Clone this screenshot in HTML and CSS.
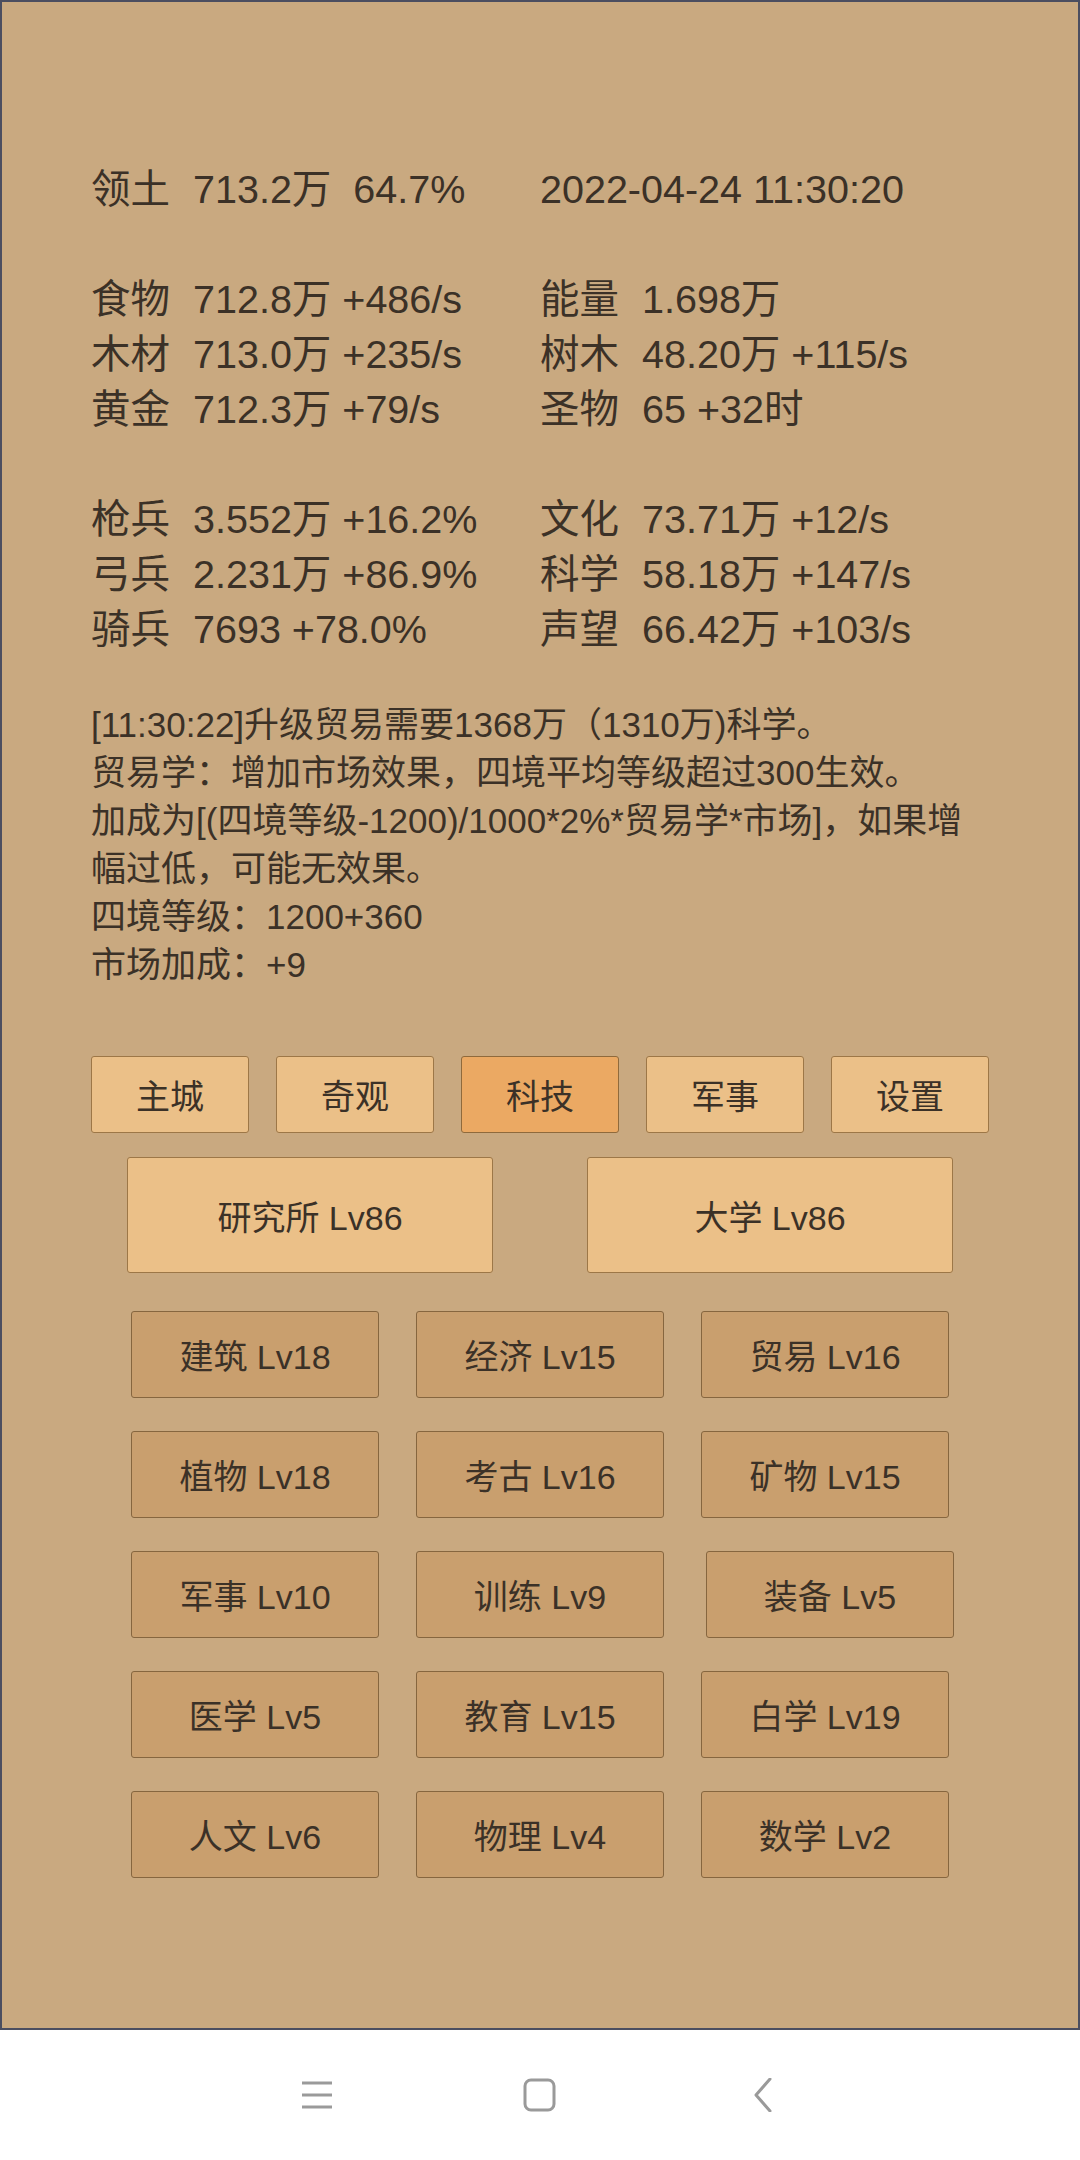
FILE: index.html
```html
<!DOCTYPE html>
<html lang="zh-CN">
<head>
<meta charset="utf-8">
<title>科技</title>
<link rel="stylesheet" href="styles.css">
</head>
<body>
<div class="screen">
  <div class="panel">
    <div class="stats">
      <div class="cell"><span class="k">领土</span><span class="v">713.2万  64.7%</span></div>
      <div class="cell"><span class="v">2022-04-24 11:30:20</span></div>
      <div class="blank"></div>
      <div class="cell"><span class="k">食物</span><span class="v">712.8万 +486/s</span></div>
      <div class="cell"><span class="k">能量</span><span class="v">1.698万</span></div>
      <div class="cell"><span class="k">木材</span><span class="v">713.0万 +235/s</span></div>
      <div class="cell"><span class="k">树木</span><span class="v">48.20万 +115/s</span></div>
      <div class="cell"><span class="k">黄金</span><span class="v">712.3万 +79/s</span></div>
      <div class="cell"><span class="k">圣物</span><span class="v">65 +32时</span></div>
      <div class="blank"></div>
      <div class="cell"><span class="k">枪兵</span><span class="v">3.552万 +16.2%</span></div>
      <div class="cell"><span class="k">文化</span><span class="v">73.71万 +12/s</span></div>
      <div class="cell"><span class="k">弓兵</span><span class="v">2.231万 +86.9%</span></div>
      <div class="cell"><span class="k">科学</span><span class="v">58.18万 +147/s</span></div>
      <div class="cell"><span class="k">骑兵</span><span class="v">7693 +78.0%</span></div>
      <div class="cell"><span class="k">声望</span><span class="v">66.42万 +103/s</span></div>
    </div>

    <div class="log">
      <div>[11:30:22]升级贸易需要1368万（1310万)科学。</div>
      <div>贸易学：增加市场效果，四境平均等级超过300生效。</div>
      <div>加成为[(四境等级-1200)/1000*2%*贸易学*市场]，如果增<br>幅过低，可能无效果。</div>
      <div>四境等级：1200+360</div>
      <div>市场加成：+9</div>
    </div>

    <div class="tabs">
      <div class="btn tab">主城</div>
      <div class="btn tab">奇观</div>
      <div class="btn tab active">科技</div>
      <div class="btn tab">军事</div>
      <div class="btn tab">设置</div>
    </div>

    <div class="halls">
      <div class="btn hall">研究所 Lv86</div>
      <div class="btn hall">大学 Lv86</div>
    </div>

    <div class="techs">
      <div class="btn tech">建筑 Lv18</div>
      <div class="btn tech">经济 Lv15</div>
      <div class="btn tech">贸易 Lv16</div>
      <div class="btn tech">植物 Lv18</div>
      <div class="btn tech">考古 Lv16</div>
      <div class="btn tech">矿物 Lv15</div>
      <div class="btn tech">军事 Lv10</div>
      <div class="btn tech">训练 Lv9</div>
      <div class="btn tech shifted">装备 Lv5</div>
      <div class="btn tech">医学 Lv5</div>
      <div class="btn tech">教育 Lv15</div>
      <div class="btn tech">白学 Lv19</div>
      <div class="btn tech">人文 Lv6</div>
      <div class="btn tech">物理 Lv4</div>
      <div class="btn tech">数学 Lv2</div>
    </div>
  </div>

  <div class="navbar">
    <div class="nav-icon">
      <svg width="34" height="34" viewBox="0 0 34 34"><g stroke="#9a9a9a" stroke-width="3" stroke-linecap="butt"><line x1="2" y1="5" x2="32" y2="5"/><line x1="2" y1="17" x2="32" y2="17"/><line x1="2" y1="29" x2="32" y2="29"/></g></svg>
    </div>
    <div class="nav-icon">
      <svg width="34" height="34" viewBox="0 0 34 34"><rect x="2" y="2" width="29" height="30" rx="6" ry="6" fill="none" stroke="#9a9a9a" stroke-width="3"/></svg>
    </div>
    <div class="nav-icon">
      <svg width="34" height="34" viewBox="0 0 34 34"><polyline points="24,1 10,17 24,33" fill="none" stroke="#9a9a9a" stroke-width="3" stroke-linejoin="round" stroke-linecap="round"/></svg>
    </div>
  </div>
</div>
</body>
</html>
```

FILE: styles.css
```css
html, body {
  margin: 0;
  padding: 0;
  background: #ffffff;
}

.screen {
  width: 1080px;
  height: 2160px;
  display: flex;
  flex-direction: column;
  font-family: "Liberation Sans", "Noto Sans CJK SC", sans-serif;
  color: #3b3127;
}

.panel {
  box-sizing: border-box;
  height: 2030px;
  background: #c9a980;
  border: 2px solid #4b4e60;
  padding: 160px 89px 0 89px;
  display: flex;
  flex-direction: column;
}

.stats {
  display: grid;
  grid-template-columns: 449px 449px;
  grid-auto-rows: 55px;
  font-size: 39.5px;
  line-height: 55px;
}

.blank {
  grid-column: 1 / span 2;
}

.cell {
  white-space: pre;
}

.k {
  display: inline-block;
  margin-right: 23px;
}

.log {
  margin-top: 44px;
  font-size: 35px;
  line-height: 48px;
}

.tabs {
  margin-top: 67px;
  display: flex;
  gap: 27px;
}

.btn {
  box-sizing: border-box;
  display: flex;
  align-items: center;
  justify-content: center;
  font-size: 34px;
  border-radius: 3px;
  color: #3b3127;
}

.tab {
  width: 158px;
  height: 77px;
  background: #ebc088;
  border: 1px solid #9d7747;
}

.tab.active {
  background: #eba963;
  border-color: #8f6a3c;
}

.halls {
  margin-top: 24px;
  display: flex;
  justify-content: center;
  gap: 94px;
}

.hall {
  width: 366px;
  height: 116px;
  background: #ebc088;
  border: 1px solid #9d7747;
}

.techs {
  margin-top: 38px;
  display: grid;
  grid-template-columns: repeat(3, 248px);
  grid-auto-rows: 87px;
  column-gap: 37px;
  row-gap: 33px;
  justify-content: center;
}

.tech {
  background: #c99f6e;
  border: 1px solid #86663f;
}

.tech.shifted {
  margin-left: 5px;
  margin-right: -5px;
}

.navbar {
  flex: 1;
  display: flex;
  align-items: center;
  justify-content: center;
  gap: 189px;
}

.nav-icon {
  width: 34px;
  height: 34px;
  display: flex;
}
```
